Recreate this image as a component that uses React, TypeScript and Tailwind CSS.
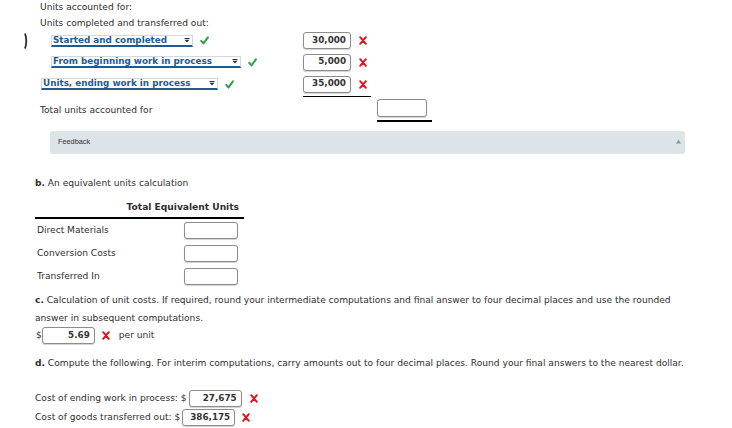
import React from "react";

function Check() {
  return (
    <svg width="9" height="9" viewBox="0 0 9 9" className="shrink-0">
      <path d="M1.2 4.9 L3.5 7.4 L7.9 1.3" fill="none" stroke="#2ea043" strokeWidth="2" strokeLinecap="round" strokeLinejoin="round" />
    </svg>
  );
}

function XMark() {
  return (
    <svg width="8" height="9" viewBox="0 0 8 9" className="shrink-0">
      <path d="M1.2 1.2 L6.8 7.8 M6.8 1.2 L1.2 7.8" stroke="#e5141b" strokeWidth="2" strokeLinecap="round" />
    </svg>
  );
}

function Arrow() {
  return (
    <svg width="6" height="5" viewBox="0 0 6 5" className="shrink-0 mr-[2px]">
      <rect x="0.5" y="0" width="5" height="1" fill="#333" />
      <path d="M0.5 1.8 L5.5 1.8 L3 4.5 Z" fill="#333" />
    </svg>
  );
}

function Dropdown({ label, className }: { label: string; className: string }) {
  return (
    <div className={"flex items-center h-[12px] border border-[#d3d8dc] border-b-2 border-b-[#1f5b93] bg-white " + className}>
      <span className="flex-1 pl-[1px] text-[8.8px] font-bold text-[#1f5b93] leading-none whitespace-nowrap">{label}</span>
      <Arrow />
    </div>
  );
}

function Box({ value, className }: { value?: string; className: string }) {
  return (
    <div className={"flex items-center justify-end rounded-[3px] border border-[#8c8c8c] bg-white pr-[4px] text-[8.8px] font-bold text-[#333] shadow-[0_1px_1px_rgba(0,0,0,0.18)] " + className}>
      {value}
    </div>
  );
}

export default function App() {
  return (
    <div className="w-[732px] h-[428px] overflow-hidden bg-white text-[#2e2e2e] font-['DejaVu_Sans',Verdana,sans-serif] text-[9.1px]">
      <div className="pl-[40px] h-[14px] leading-[14px]">Units accounted for:</div>
      <div className="pl-[40px] h-[14px] leading-[14px] mt-[2px]">Units completed and transferred out:</div>

      <div className="flex items-center h-[21px]">
        <div className="w-[303px] flex items-center">
          <svg width="4" height="16" viewBox="0 0 4 16" className="ml-[24px] shrink-0">
            <path d="M1 0.5 Q3.6 8 1 15.5" fill="none" stroke="#2b2b2b" strokeWidth="1.8" />
          </svg>
          <Dropdown label="Started and completed" className="ml-[23px] w-[142px]" />
          <div className="ml-[7px]"><Check /></div>
        </div>
        <Box value="30,000" className="w-[48px] h-[17px]" />
        <div className="ml-[8px]"><XMark /></div>
      </div>

      <div className="flex items-center h-[22px]">
        <div className="w-[303px] flex items-center">
          <Dropdown label="From beginning work in process" className="ml-[51px] w-[190px]" />
          <div className="ml-[7px]"><Check /></div>
        </div>
        <Box value="5,000" className="w-[48px] h-[17px]" />
        <div className="ml-[8px]"><XMark /></div>
      </div>

      <div className="flex items-center h-[22px]">
        <div className="w-[303px] flex items-center">
          <Dropdown label="Units, ending work in process" className="ml-[41px] w-[177px]" />
          <div className="ml-[7px]"><Check /></div>
        </div>
        <Box value="35,000" className="w-[48px] h-[17px]" />
        <div className="ml-[8px]"><XMark /></div>
      </div>

      <div className="ml-[303px] mt-[1px] w-[68px] h-[1px] bg-black" />

      <div className="flex items-start mt-[2px]">
        <div className="w-[377px] pl-[40px] pt-[4px] leading-[14px]">Total units accounted for</div>
        <Box className="w-[50px] h-[18px]" />
      </div>
      <div className="ml-[377px] mt-[3px] w-[55px] h-[2px] bg-black" />

      <div className="ml-[50px] mt-[9px] w-[635px] h-[23px] rounded-[3px] bg-[#dde4e7] flex items-center justify-between pl-[8px] pr-[4px]">
        <span className="font-['Liberation_Sans',Arial,sans-serif] text-[7.3px] text-[#333]">Feedback</span>
        <svg width="5" height="5" viewBox="0 0 5 5" className="mb-[3px]">
          <path d="M0 4.5 L2.5 0.5 L5 4.5 Z" fill="#8e9598" />
        </svg>
      </div>

      <div className="pl-[35px] mt-[22px] h-[14px] leading-[14px]">
        <span className="font-bold">b.</span> An equivalent units calculation
      </div>

      <div className="ml-[35px] w-[209px] mt-[10px]">
        <div className="h-[14px] leading-[14px] text-right pr-[5px] font-bold">Total Equivalent Units</div>
        <div className="mt-[3px] h-[2px] bg-black" />
        <div className="flex items-center h-[23px]">
          <div className="w-[149px] pl-[2px]">Direct Materials</div>
          <Box className="w-[54px] h-[17px]" />
        </div>
        <div className="flex items-center h-[23px]">
          <div className="w-[149px] pl-[2px]">Conversion Costs</div>
          <Box className="w-[54px] h-[17px]" />
        </div>
        <div className="flex items-center h-[23px]">
          <div className="w-[149px] pl-[2px]">Transferred In</div>
          <Box className="w-[54px] h-[17px]" />
        </div>
      </div>

      <div className="pl-[35px] mt-[3px] leading-[18px] whitespace-nowrap">
        <span className="font-bold">c.</span> Calculation of unit costs. If required, round your intermediate computations and final answer to four decimal places and use the rounded
        <br />
        answer in subsequent computations.
      </div>

      <div className="flex items-center h-[17px] pl-[36px]">
        <span>$</span>
        <Box value="5.69" className="w-[53px] h-[17px]" />
        <div className="ml-[7px]"><XMark /></div>
        <span className="ml-[9px]">per unit</span>
      </div>

      <div className="pl-[35px] mt-[10px] leading-[18px] whitespace-nowrap">
        <span className="font-bold">d.</span> Compute the following. For interim computations, carry amounts out to four decimal places. Round your final answers to the nearest dollar.
      </div>

      <div className="flex items-center h-[17px] pl-[35px] mt-[18px]">
        <span className="whitespace-nowrap">Cost of ending work in process: $</span>
        <Box value="27,675" className="ml-[2px] w-[53px] h-[17px]" />
        <div className="ml-[8px]"><XMark /></div>
      </div>
      <div className="flex items-center h-[17px] pl-[35px] mt-[2px]">
        <span className="whitespace-nowrap">Cost of goods transferred out: $</span>
        <Box value="386,175" className="ml-[2px] w-[53px] h-[17px]" />
        <div className="ml-[7px]"><XMark /></div>
      </div>
    </div>
  );
}
